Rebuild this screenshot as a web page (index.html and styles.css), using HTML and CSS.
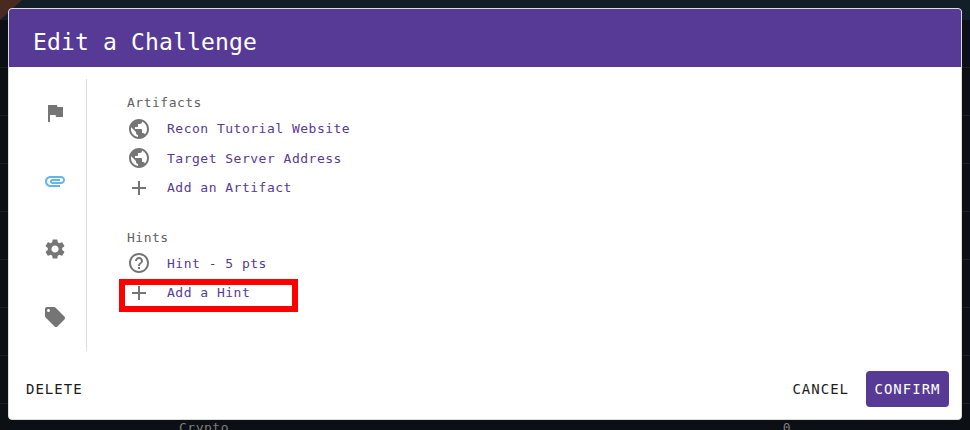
FILE: index.html
```html
<!DOCTYPE html>
<html lang="en">

<head>
    <meta charset="UTF-8">
    <title>Edit a Challenge</title>
    <link rel="stylesheet" href="styles.css">
</head>

<body>
    <!-- table behind the dialog -->
    <div class="backdrop">
        <div class="corner"></div>
        <div class="table-row">
            <span class="cell-category">Crypto</span>
            <span class="cell-count">0</span>
        </div>
    </div>

    <div class="modal">
        <div class="modal-title">Edit a Challenge</div>
        <div class="modal-body">
            <div class="tabs">
                <div class="tab">
                    <svg class="icon" viewBox="0 0 24 24"><path d="M14.4 6L14 4H5v17h2v-7h5.6l.4 2h7V6z"/></svg>
                </div>
                <div class="tab active">
                    <svg class="icon" viewBox="0 0 24 24"><path d="M2 12.5C2 9.46 4.46 7 7.5 7H18c2.21 0 4 1.79 4 4s-1.79 4-4 4H9.5C8.12 15 7 13.88 7 12.5S8.12 10 9.5 10H17v2H9.41c-.55 0-.55 1 0 1H18c1.1 0 2-.9 2-2s-.9-2-2-2H7.5C5.57 9 4 10.57 4 12.5S5.57 16 7.5 16H17v2H7.5C4.46 18 2 15.54 2 12.5z"/></svg>
                </div>
                <div class="tab">
                    <svg class="icon" viewBox="0 0 24 24"><path d="M19.14 12.94c.04-.3.06-.61.06-.94 0-.32-.02-.64-.07-.94l2.03-1.58c.18-.14.23-.41.12-.61l-1.92-3.32c-.12-.22-.37-.29-.59-.22l-2.39.96c-.5-.38-1.03-.7-1.62-.94l-.36-2.54c-.04-.24-.24-.41-.48-.41h-3.84c-.24 0-.43.17-.47.41l-.36 2.54c-.59.24-1.13.57-1.62.94l-2.39-.96c-.22-.08-.47 0-.59.22L2.74 8.87c-.12.21-.08.47.12.61l2.03 1.58c-.05.3-.09.63-.09.94s.02.64.07.94l-2.03 1.58c-.18.14-.23.41-.12.61l1.92 3.32c.12.22.37.29.59.22l2.39-.96c.5.38 1.03.7 1.62.94l.36 2.54c.05.24.24.41.48.41h3.84c.24 0 .44-.17.47-.41l.36-2.54c.59-.24 1.13-.56 1.62-.94l2.39.96c.22.08.47 0 .59-.22l1.92-3.32c.12-.22.07-.47-.12-.61l-2.01-1.58zM12 15.6c-1.98 0-3.6-1.62-3.6-3.6s1.62-3.6 3.6-3.6 3.6 1.62 3.6 3.6-1.62 3.6-3.6 3.6z"/></svg>
                </div>
                <div class="tab">
                    <svg class="icon" viewBox="0 0 24 24"><path d="M21.41 11.58l-9-9C12.05 2.22 11.55 2 11 2H4c-1.1 0-2 .9-2 2v7c0 .55.22 1.05.59 1.42l9 9c.36.36.86.58 1.41.58.55 0 1.05-.22 1.41-.59l7-7c.37-.36.59-.86.59-1.41 0-.55-.23-1.06-.59-1.42zM5.5 7C4.67 7 4 6.33 4 5.5S4.67 4 5.5 4 7 4.67 7 5.5 6.33 7 5.5 7z"/></svg>
                </div>
            </div>
            <div class="content">
                <div class="section">
                    <div class="section-title">Artifacts</div>
                    <div class="row">
                        <svg class="icon" viewBox="0 0 24 24"><path d="M12 2C6.48 2 2 6.48 2 12s4.48 10 10 10 10-4.48 10-10S17.52 2 12 2zm-1 17.93c-3.95-.49-7-3.85-7-7.93 0-.62.08-1.21.21-1.79L9 15v1c0 1.1.9 2 2 2v1.93zm6.9-2.54c-.26-.81-1-1.39-1.9-1.39h-1v-3c0-.55-.45-1-1-1H8v-2h2c.55 0 1-.45 1-1V7h2c1.1 0 2-.9 2-2v-.41c2.93 1.19 5 4.06 5 7.41 0 2.08-.8 3.97-2.1 5.39z"/></svg>
                        <span>Recon Tutorial Website</span>
                    </div>
                    <div class="row">
                        <svg class="icon" viewBox="0 0 24 24"><path d="M12 2C6.48 2 2 6.48 2 12s4.48 10 10 10 10-4.48 10-10S17.52 2 12 2zm-1 17.93c-3.95-.49-7-3.85-7-7.93 0-.62.08-1.21.21-1.79L9 15v1c0 1.1.9 2 2 2v1.93zm6.9-2.54c-.26-.81-1-1.39-1.9-1.39h-1v-3c0-.55-.45-1-1-1H8v-2h2c.55 0 1-.45 1-1V7h2c1.1 0 2-.9 2-2v-.41c2.93 1.19 5 4.06 5 7.41 0 2.08-.8 3.97-2.1 5.39z"/></svg>
                        <span>Target Server Address</span>
                    </div>
                    <div class="row">
                        <svg class="icon" viewBox="0 0 24 24"><path d="M19 13h-6v6h-2v-6H5v-2h6V5h2v6h6v2z"/></svg>
                        <span>Add an Artifact</span>
                    </div>
                </div>
                <div class="section">
                    <div class="section-title">Hints</div>
                    <div class="row">
                        <svg class="icon" viewBox="0 0 24 24"><path d="M11 18h2v-2h-2v2zm1-16C6.48 2 2 6.48 2 12s4.48 10 10 10 10-4.48 10-10S17.52 2 12 2zm0 18c-4.41 0-8-3.59-8-8s3.59-8 8-8 8 3.59 8 8-3.59 8-8 8zm0-14c-2.21 0-4 1.79-4 4h2c0-1.1.9-2 2-2s2 .9 2 2c0 2-3 1.75-3 5h2c0-2.25 3-2.5 3-5 0-2.21-1.79-4-4-4z"/></svg>
                        <span>Hint - 5 pts</span>
                    </div>
                    <div class="row">
                        <svg class="icon" viewBox="0 0 24 24"><path d="M19 13h-6v6h-2v-6H5v-2h6V5h2v6h6v2z"/></svg>
                        <span>Add a Hint</span>
                    </div>
                </div>
            </div>
        </div>
        <div class="modal-footer">
            <button class="btn">DELETE</button>
            <div class="footer-right">
                <button class="btn">CANCEL</button>
                <button class="btn primary">CONFIRM</button>
            </div>
        </div>
        <!-- red box drawn over the screenshot -->
        <div class="highlight"></div>
    </div>
</body>

</html>
```

FILE: styles.css
```css
html, body {
    margin: 0;
    height: 100%;
}
body {
    background-color: #0c1014;
    font-family: "DejaVu Sans Mono", "Liberation Mono", monospace;
    overflow: hidden;
}

/* page behind the dialog */
.backdrop {
    position: absolute;
    left: 0; top: 0; right: 0; bottom: 0;
    background:
        linear-gradient(#121f29 20px, transparent 20px),
        repeating-linear-gradient(transparent 0, transparent 47px, #1b2025 47px, #1b2025 48px) 0 20px;
}
.corner {
    position: absolute;
    left: 0; top: 0;
    width: 0; height: 0;
    border-top: 20px solid #4a2a20;
    border-right: 22px solid transparent;
}
.table-row {
    position: absolute;
    left: 179px; top: 420px;
    width: 612px;
    display: flex;
    justify-content: space-between;
    font-size: 13px;
    letter-spacing: 0.5px;
    color: #7d7d7d;
}

/* dialog */
.modal {
    position: absolute;
    left: 8px; top: 8px;
    width: 952px; height: 410px;
    background-color: #fff;
    border: 1px solid #dcdcdc;
    border-radius: 4px;
    display: flex;
    flex-direction: column;
}
.modal-title {
    height: 58px;
    line-height: 66px;
    padding-left: 24px;
    background-color: #563a96;
    border-radius: 3px 3px 0 0;
    color: #fff;
    font-size: 23px;
    letter-spacing: 0.15px;
}
.modal-body {
    flex: 1;
    display: flex;
    padding-top: 12px;
}
.tabs {
    width: 77px;
    height: 272px;
    border-right: 1px solid #dcdcdc;
}
.tab {
    height: 68px;
    padding-left: 14px;
    display: flex;
    align-items: center;
    justify-content: center;
    fill: #757575;
}
.tab.active {
    fill: #64b5e8;
}
.icon {
    width: 24px; height: 24px;
    fill: inherit;
    flex: none;
}
.content {
    padding-left: 40px;
    padding-top: 14px;
}
.section {
    margin-bottom: 25px;
}
.section-title {
    height: 21px;
    line-height: 20px;
    font-size: 13px;
    letter-spacing: 0.5px;
    color: #616161;
}
.row {
    height: 29.5px;
    display: flex;
    align-items: center;
    gap: 16px;
    font-size: 13px;
    letter-spacing: 0.5px;
    color: #563a96;
    fill: #757575;
}
.modal-footer {
    height: 48px;
    padding: 0 12px 0 17px;
    display: flex;
    align-items: flex-start;
    justify-content: space-between;
}
.footer-right {
    display: flex;
    align-items: center;
    gap: 17px;
}
.btn {
    height: 36px;
    padding: 0;
    border: 0;
    background: none;
    font-family: inherit;
    font-size: 14px;
    letter-spacing: 1px;
    color: #1c1c1c;
}
.btn.primary {
    width: 83px;
    border-radius: 4px;
    background-color: #563a96;
    color: #fff;
}
.highlight {
    position: absolute;
    left: 110px; top: 270px;
    width: 167px; height: 21px;
    border: 6px solid #ff0000;
}
```
